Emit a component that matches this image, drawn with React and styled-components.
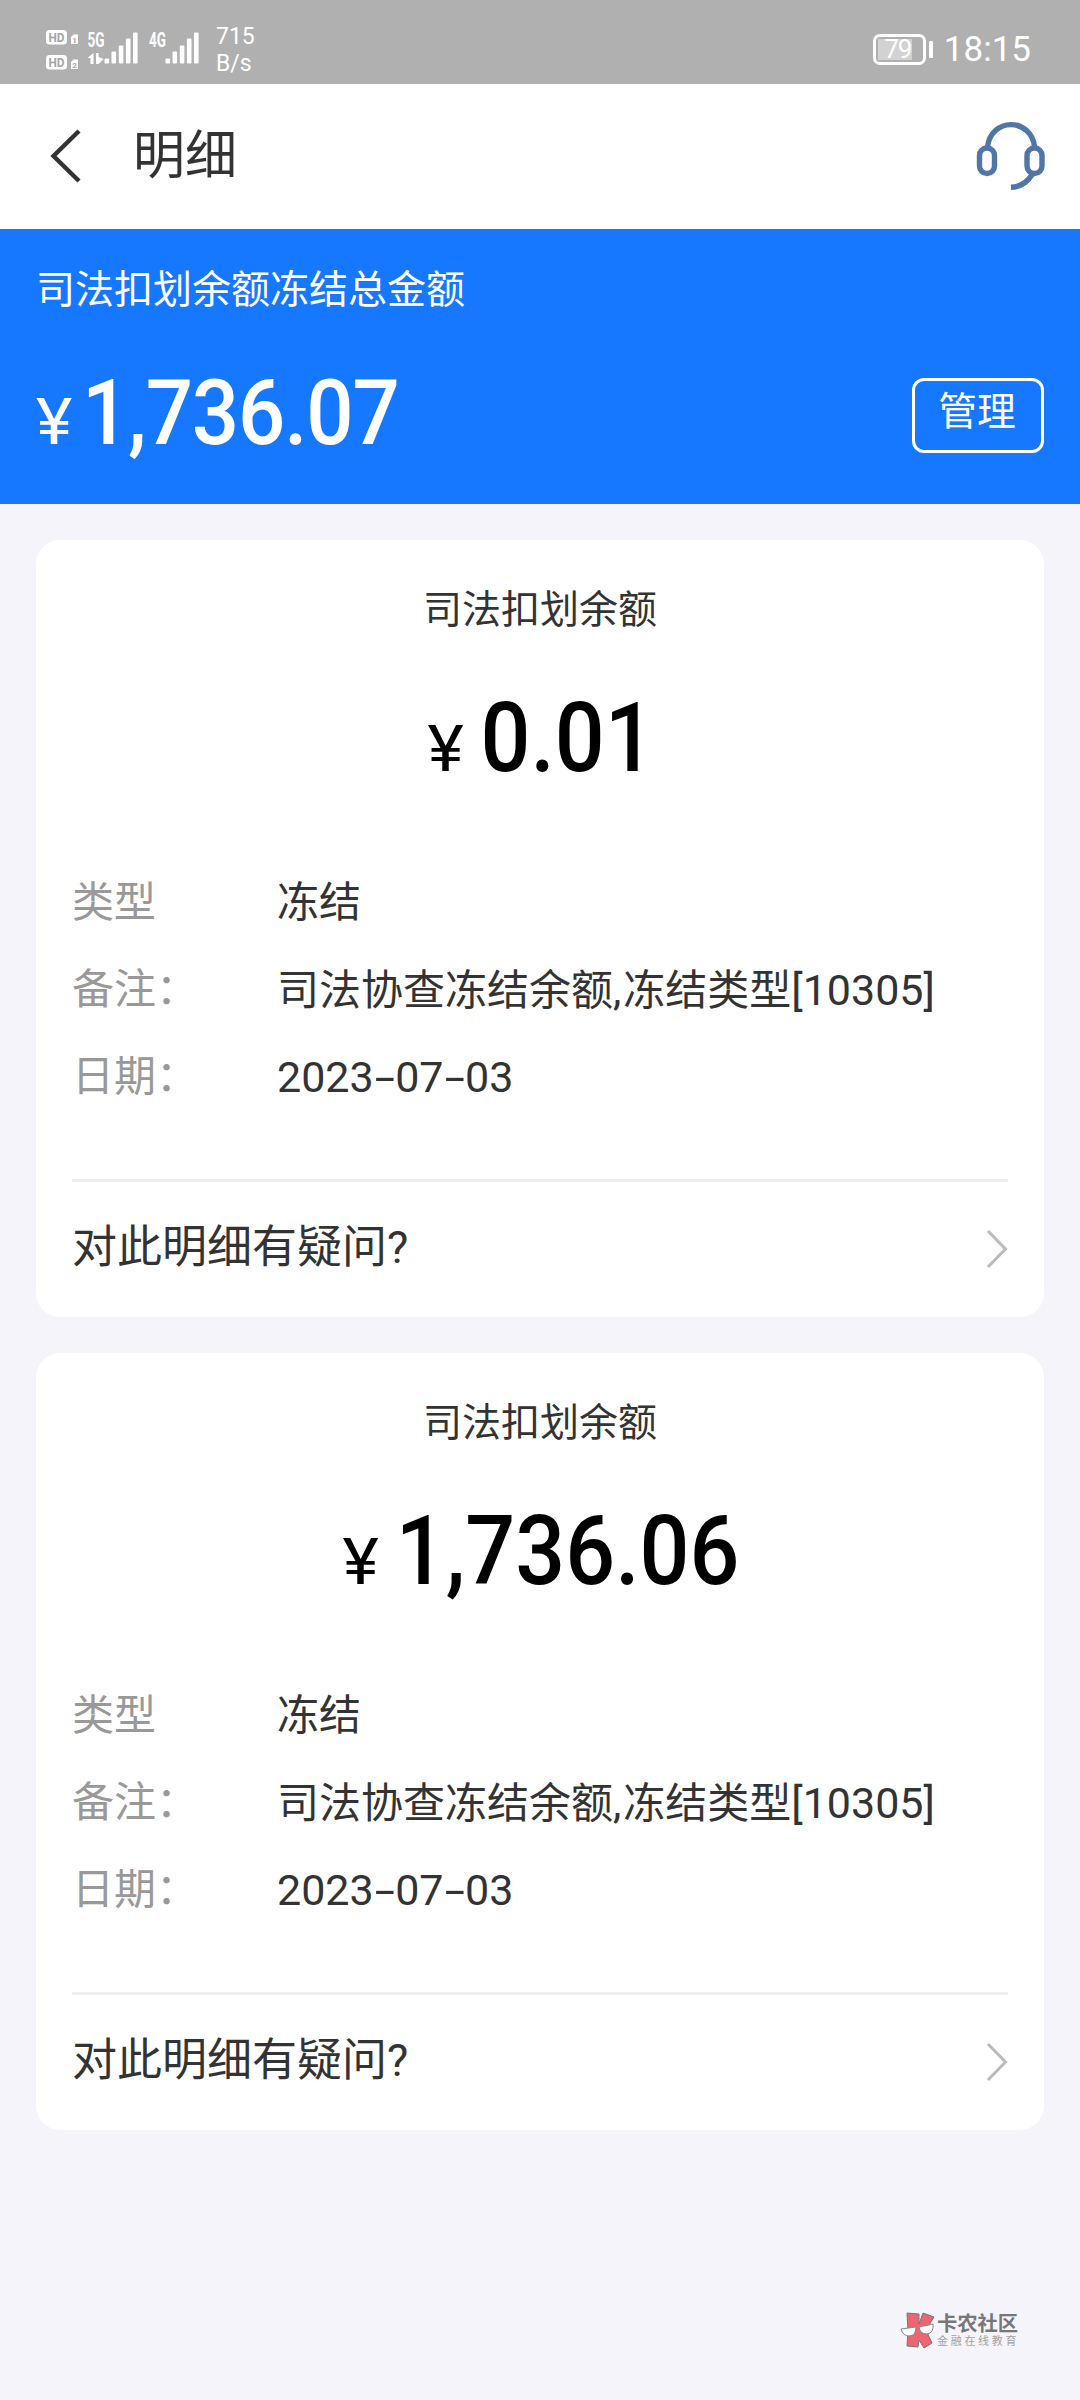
import React from "react";
import styled, { createGlobalStyle } from "styled-components";

const GlobalStyle = createGlobalStyle`
  * {
    box-sizing: border-box;
  }
  body {
    margin: 0;
    background: #f4f4fa;
    font-family: Roboto, "Noto Sans CJK SC", sans-serif;
    color: #333;
  }
`;

const Page = styled.div`
  position: relative;
  width: 1080px;
  height: 2400px;
  overflow: hidden;
  background: #f4f4fa;
`;

const StatusBar = styled.div`
  display: flex;
  justify-content: space-between;
  height: 84px;
  padding: 0 49px 0 46px;
  background: #b0b0b0;
  color: #fff;
`;

const StatusLeft = styled.div`
  display: flex;
  padding-top: 24px;
`;

const NetSpeed = styled.div`
  margin-left: 17px;
  font-size: 23px;
  line-height: 26.5px;
`;

const StatusRight = styled.div`
  display: flex;
  align-items: center;
  padding-top: 15px;
`;

const Battery = styled.div`
  display: flex;
  justify-content: center;
  align-items: center;
  width: 53px;
  height: 31px;
  padding-right: 3px;
  border: 3px solid #fff;
  border-radius: 7px;
  background: linear-gradient(#d2d2d2, #d2d2d2) 2px 2px / 34px 21px no-repeat;
  font-size: 26px;
  letter-spacing: -1px;
  line-height: 25px;
`;

const BatteryTip = styled.div`
  width: 4px;
  height: 17px;
  margin-left: 3px;
  border-radius: 1px;
  background: #fff;
`;

const Clock = styled.span`
  margin-left: 11px;
  font-size: 35px;
  line-height: 40px;
`;

const NavBar = styled.div`
  display: flex;
  align-items: center;
  height: 145px;
  padding: 0 33px 0 48px;
  background: #fff;

  svg {
    margin-top: -2px;
  }
`;

const NavTitle = styled.h1`
  flex: 1;
  margin: 0 0 0 51px;
  font-size: 52px;
  font-weight: 400;
  line-height: 60px;
`;

const Summary = styled.div`
  height: 275px;
  padding: 37px 36px 0;
  background: #1677ff;
  color: #fff;
`;

const SummaryTitle = styled.div`
  font-size: 39px;
  line-height: 48px;
`;

const SummaryRow = styled.div`
  display: flex;
  justify-content: space-between;
  margin-top: 45px;
`;

const Amount = styled.div`
  display: flex;
  align-items: baseline;
  justify-content: center;
  height: 110px;
  font-size: ${(props) => props.$size}px;
  font-weight: 500;
  letter-spacing: ${(props) => props.$spacing || 0}px;
  line-height: ${(props) => props.$lineHeight || 110}px;
  transform: scaleX(0.915);
  transform-origin: ${(props) => props.$origin || "center"};
`;

const Yen = styled.span`
  display: inline-block;
  margin-right: ${(props) => props.$gap}px;
  font-size: 65px;
  font-weight: 400;
  letter-spacing: 0;
  transform: scaleX(1.16);
  transform-origin: left;
`;

const ManageButton = styled.button`
  width: 132px;
  height: 75px;
  margin-top: 19px;
  padding: 0 2px 8px 0;
  border: 3px solid #fff;
  border-radius: 12px;
  background: none;
  color: #fff;
  font-family: inherit;
  font-size: 38.8px;
  line-height: 60px;
`;

const CardList = styled.div`
  display: flex;
  flex-direction: column;
  gap: 36px;
  padding: 36px;
`;

const Card = styled.div`
  height: 777px;
  padding: 45px 36px 0;
  border-radius: 24px;
  background: #fff;
`;

const CardTitle = styled.div`
  font-size: 39px;
  line-height: 50px;
  text-align: center;
`;

const CardAmount = styled.div`
  margin: 48px 0 67px;
  padding-left: 2px;
  color: #000;
`;

const Row = styled.div`
  display: flex;
  height: 87px;
  font-size: 42px;
  line-height: 86px;
  white-space: nowrap;
`;

const Label = styled.span`
  width: 205px;
  color: #999;
`;

const Value = styled.span`
  color: #333;
`;

const Num = styled.span`
  font-size: 43px;
`;

const Comma = styled.span`
  margin-right: 2px;
`;

const Dash = styled.span`
  display: inline-block;
  width: 21.5px;
  text-align: center;
  transform: scaleX(1.7);
`;

const Question = styled.div`
  display: flex;
  justify-content: space-between;
  align-items: center;
  height: 137px;
  margin-top: 58px;
  border-top: 3px solid #eee;
  font-size: 45px;
  line-height: 60px;

  span {
    margin-top: -2px;
  }
`;

const Watermark = styled.div`
  position: absolute;
  left: 899px;
  top: 2309px;
  display: flex;
  align-items: center;
`;

const WatermarkName = styled.div`
  margin-top: 3px;
  color: #777;
  font-size: 20.3px;
  font-weight: 700;
  line-height: 22px;
`;

const WatermarkSub = styled.div`
  margin-top: 1px;
  color: #a2a2a2;
  font-size: 11px;
  letter-spacing: 2.7px;
  line-height: 12px;
`;

const records = [
  { id: 1, amount: "0.01" },
  { id: 2, amount: "1,736.06" },
];

const date = ["2023", "07", "03"];

const bars = [
  [0, 35, 5],
  [7, 28, 12],
  [14.3, 22, 18],
  [21.4, 15, 25],
  [28.5, 9, 31],
];

const SignalIcons = () => (
  <svg width="153" height="54" viewBox="0 0 153 54" fill="#fff">
    <g fontFamily="Roboto" fontWeight="700">
      <rect x="0" y="6" width="21" height="14.5" rx="3.5" />
      <rect x="0" y="31" width="21" height="14.5" rx="3.5" />
      <path d="M25 13l2.5-2.500h4.500v9.500h-7z" />
      <path d="M25 38l2.5-2.500h4.500v9.500h-7z" />
      <g fill="#a4a4a4">
        <text x="2.5" y="17.8" fontSize="13" textLength="16" lengthAdjust="spacingAndGlyphs">HD</text>
        <text x="2.5" y="42.8" fontSize="13" textLength="16" lengthAdjust="spacingAndGlyphs">HD</text>
        <text x="26.2" y="18.6" fontSize="8">1</text>
        <text x="26.2" y="43.6" fontSize="8">2</text>
      </g>
      <text x="41.5" y="23" fontSize="19.5" textLength="17" lengthAdjust="spacingAndGlyphs">5G</text>
      <text x="103" y="23" fontSize="19.5" textLength="17" lengthAdjust="spacingAndGlyphs">4G</text>
    </g>
    <path d="M47.5 29v11h-3v-6h-3zM50 29h2.6v4l5 2-5 5H50z" />
    {[58.5, 119.5].map((left) =>
      bars.map(([x, y, h]) => (
        <rect key={`${left}-${x}`} x={left + x} y={y - 0.5} width="4.6" height={h} rx="1" />
      ))
    )}
  </svg>
);

const HeadsetIcon = () => (
  <svg width="72" height="72" viewBox="15 10 72 72" fill="none" stroke="#5076a5" strokeWidth="5.4">
    <path d="M27.5 37C29 23 39.5 14.6 51 14.6S73 23 74.7 37" />
    <rect x="19.5" y="38" width="15" height="25.5" rx="7.5" />
    <rect x="67" y="38" width="15" height="25.5" rx="7.5" />
    <path d="M72.5 64C67.5 72 60.5 77 51 77.3" />
  </svg>
);

const WatermarkLogo = () => (
  <svg width="38" height="40" viewBox="0 0 38 40">
    <g fill="#ec6672" stroke="#777" strokeWidth="1">
      <path d="M8 4L20 5L20 15L24 4L35 8L27 21L33 34L25 39L20 31L19 38L8 37L9 22Z" />
    </g>
    <g fill="#fff" stroke="#888" strokeWidth="1">
      <path d="M2 20L17 18Q17 27 10 27Q4 27 2 20Z" />
      <path d="M20 18L34 15Q35 24 28 25Q21 25 20 18Z" />
    </g>
  </svg>
);

const RecordCard = ({ record }) => (
  <Card>
    <CardTitle>司法扣划余额</CardTitle>
    <CardAmount>
      <Amount $size={96}>
        <Yen $gap={24}>¥</Yen>
        <span>{record.amount}</span>
      </Amount>
    </CardAmount>
    <Row>
      <Label>类型</Label>
      <Value>冻结</Value>
    </Row>
    <Row>
      <Label>备注：</Label>
      <Value>
        司法协查冻结余额<Comma>,</Comma>冻结类型<Num>[10305]</Num>
      </Value>
    </Row>
    <Row>
      <Label>日期：</Label>
      <Value>
        <Num>
          {date.map((part, i) => (
            <React.Fragment key={i}>
              {i > 0 && <Dash>-</Dash>}
              {part}
            </React.Fragment>
          ))}
        </Num>
      </Value>
    </Row>
    <Question>
      <span>对此明细有疑问?</span>
      <svg width="22" height="42" viewBox="0 0 22 42" fill="none" stroke="#bbb" strokeWidth="3">
        <path d="M2 3l17.5 18L2 39" />
      </svg>
    </Question>
  </Card>
);

const App = () => {
  return (
    <Page>
      <GlobalStyle />
      <StatusBar>
        <StatusLeft>
          <SignalIcons />
          <NetSpeed>
            <div>715</div>
            <div>B/s</div>
          </NetSpeed>
        </StatusLeft>
        <StatusRight>
          <Battery>79</Battery>
          <BatteryTip />
          <Clock>18:15</Clock>
        </StatusRight>
      </StatusBar>
      <NavBar>
        <svg width="34" height="56" viewBox="0 0 34 56" fill="none" stroke="#333" strokeWidth="4.4">
          <path d="M31 3L5.5 28L31 53" />
        </svg>
        <NavTitle>明细</NavTitle>
        <HeadsetIcon />
      </NavBar>
      <Summary>
        <SummaryTitle>司法扣划余额冻结总金额</SummaryTitle>
        <SummaryRow>
          <Amount $size={91} $spacing={-1.2} $lineHeight={108} $origin="left">
            <Yen $gap={16}>¥</Yen>
            <span>1,736.07</span>
          </Amount>
          <ManageButton>管理</ManageButton>
        </SummaryRow>
      </Summary>
      <CardList>
        {records.map((record) => (
          <RecordCard key={record.id} record={record} />
        ))}
      </CardList>
      <Watermark>
        <WatermarkLogo />
        <div>
          <WatermarkName>卡农社区</WatermarkName>
          <WatermarkSub>金融在线教育</WatermarkSub>
        </div>
      </Watermark>
    </Page>
  );
};

export default App;
